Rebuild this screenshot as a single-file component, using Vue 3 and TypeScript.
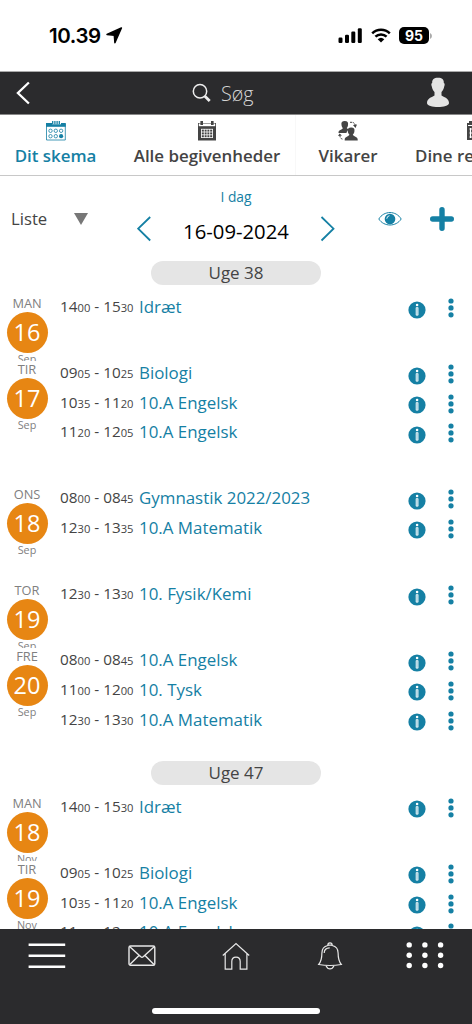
<script setup lang="ts">
interface Lesson { from: [string, string]; to: [string, string]; name: string }
interface Day { label: string; date: number; month: string; height: string; lessons: Lesson[] }
interface Week { title: string; days: Day[] }

const lesson = (a: string, b: string, name: string): Lesson => ({
  from: [a.slice(0, 2), a.slice(2)],
  to: [b.slice(0, 2), b.slice(2)],
  name,
})

const weeks: Week[] = [
  {
    title: 'Uge 38',
    days: [
      { label: 'MAN', date: 16, month: 'Sep', height: 'short', lessons: [lesson('1400', '1530', 'Idræt')] },
      {
        label: 'TIR', date: 17, month: 'Sep', height: 'tall',
        lessons: [lesson('0905', '1025', 'Biologi'), lesson('1035', '1120', '10.A Engelsk'), lesson('1120', '1205', '10.A Engelsk')],
      },
      {
        label: 'ONS', date: 18, month: 'Sep', height: 'medium',
        lessons: [lesson('0800', '0845', 'Gymnastik 2022/2023'), lesson('1230', '1335', '10.A Matematik')],
      },
      { label: 'TOR', date: 19, month: 'Sep', height: 'short', lessons: [lesson('1230', '1330', '10. Fysik/Kemi')] },
      {
        label: 'FRE', date: 20, month: 'Sep', height: 'last',
        lessons: [lesson('0800', '0845', '10.A Engelsk'), lesson('1100', '1200', '10. Tysk'), lesson('1230', '1330', '10.A Matematik')],
      },
    ],
  },
  {
    title: 'Uge 47',
    days: [
      { label: 'MAN', date: 18, month: 'Nov', height: 'short', lessons: [lesson('1400', '1530', 'Idræt')] },
      {
        label: 'TIR', date: 19, month: 'Nov', height: 'tall',
        lessons: [lesson('0905', '1025', 'Biologi'), lesson('1035', '1120', '10.A Engelsk'), lesson('1120', '1205', '10.A Engelsk')],
      },
    ],
  },
]
const dots = [0, 1, 2]
</script>

<template>
  <div class="phone">
    <div class="status">
      <span class="clock">10.39</span>
      <svg class="loc" width="17" height="17" viewBox="0 0 17 17"><path d="M15.400 1 1 7.400l7.300.8.600 7.500z" stroke="#000" stroke-width="1.500" stroke-linejoin="round" /></svg>
      <svg class="signal" width="25" height="16" viewBox="0 0 25 16">
        <rect x="0.500" y="9.500" width="4" height="5.500" rx="1.200" /><rect x="7" y="6.800" width="4" height="8.200" rx="1.200" />
        <rect x="13.300" y="3.500" width="4" height="11.500" rx="1.200" /><rect x="19.800" y="0.300" width="4" height="14.700" rx="1.200" />
      </svg>
      <svg class="wifi" width="20" height="15" viewBox="0 0 20 15">
        <path d="M1.200 5.300a12.700 12.700 0 0 1 17.600 0M4.400 8.700a8 8 0 0 1 11.200 0" fill="none" stroke="#000" stroke-width="2.500" />
        <path d="M6.700 11.200a4.900 4.900 0 0 1 6.600 0L10 14.600z" />
      </svg>
      <span class="battery">95</span>
      <svg class="cap" width="3" height="6" viewBox="0 0 3 6"><path d="M0 0q2 1 2 3t-2 3z" fill="#aaa" /></svg>
    </div>

    <header class="search">
      <svg class="back" width="15" height="24" viewBox="0 0 15 24"><path d="M12.900 1.500 1.900 12l11 10.500" fill="none" stroke="#fff" stroke-width="2.300" /></svg>
      <div class="query">
        <svg width="20" height="20" viewBox="0 0 20 20"><circle cx="8" cy="8.300" r="6.700" fill="none" stroke="#eee" stroke-width="1.500" /><path d="m12.700 13 5 5" stroke="#eee" stroke-width="2.800" /></svg>
        <span>Søg</span>
      </div>
      <svg class="person" width="24" height="31" viewBox="0 0 24 31"><path d="M12 .8c-4.400 0-6 2-5.800 5.100C5.200 6 5.100 8 5.800 9.500c.4 2.500 1.500 4.300 2.700 5.400v3.700C5.200 20.700 1 21.600 1 26c0 5.300 22 5.300 22 0 0-4.400-4.200-5.300-7.500-7.400v-3.700c1.200-1.100 2.300-2.900 2.700-5.400.7-1.500.6-3.500-.4-3.600C18 2.800 16.400.8 12 .8z" fill="#e4e4e4" /></svg>
    </header>

    <nav class="tabs">
      <div class="tab mine">
        <svg width="20" height="20" viewBox="0 0 20 20">
          <path d="M.5 3v16h18.800V3" fill="none" stroke="#1580a4" stroke-width=".8" /><path d="M0 2h19.800v3.800H0z" fill="#1580a4" />
          <path d="M6 1h9v2.300H6z" fill="#fff" /><path d="M6.700 0v3.300M8.900 0v3.300M11.100 0v3.300M13.300 0v3.300" stroke="#1580a4" stroke-width="1.300" />
          <g fill="none" stroke="#1580a4" stroke-width=".8"><circle cx="4.500" cy="9.800" r="1.700" /><circle cx="9.800" cy="9.800" r="1.700" /><circle cx="15.100" cy="9.800" r="1.700" /><circle cx="4.500" cy="15.200" r="1.700" /><circle cx="9.800" cy="15.200" r="1.700" /></g><circle cx="15.100" cy="15.200" r="2.100" fill="#1580a4" />
        </svg>
        <span>Dit skema</span>
      </div>
      <div class="tab all">
        <svg width="20" height="20" viewBox="0 0 20 20">
          <path d="M1 2h18v17.500H1z" fill="#444" /><path d="M1.800 2.500h16.400v2.700H1.800z" fill="#fff" /><path d="M4.700 0v4M15.300 0v4" stroke="#444" stroke-width="2.600" />
          <path d="M4.500 8v8.800M7.300 8v8.800M10 8v8.800M12.700 8v8.800M15.500 8v8.800M4 8.300h12M4 11h12M4 13.800h12M4 16.500h12" stroke="#fff" stroke-width=".8" />
        </svg>
        <span>Alle begivenheder</span>
      </div>
      <div class="tab subs">
        <svg width="20" height="20" viewBox="0 0 20 20" fill="#444">
          <path d="M6.800 0C4 0 3 1.500 3.500 4c.2 1.500.7 2.300 1.300 3-.5 2-4.300 1.700-4.300 4.500V12h8c0-2 1.500-2.300 2-3.600L8.700 7c.7-.7 1.200-1.500 1.300-3 .5-2.500-.500-4-3.200-4z" />
          <path d="M13.200 6.500c-2.800 0-3.900 1.600-3.400 4 .2 1.400.8 2.400 1.600 3.100-.5 2.300-4.700 2-4.700 5v.9h13v-.9c0-3-4.300-2.700-4.900-5 .9-.7 1.400-1.700 1.600-3.100.5-2.400-.4-4-3.200-4z" />
          <path d="M12 1.300c3-.3 5 .5 5.400 3.500M1.800 14c0 2.500 1 4 3.200 4.200" fill="none" stroke="#444" stroke-dasharray="2 .7" /><path d="m15 4 2.500 3L19 3.500zM0 15l1.600-2.500L4 14.500z" />
        </svg>
        <span>Vikarer</span>
      </div>
      <div class="tab rest">
        <svg width="20" height="20" viewBox="0 0 20 20"><path d="M1 2h17v17H1z" fill="#444" /><path d="M3.500 8h12M3.500 12h12M3.500 16h12M4.500 7v10M8.500 7v10" stroke="#fff" stroke-width="1.200" /><path d="M2 4.500h14" stroke="#fff" /><path d="M4.500 0v4M15 0v4" stroke="#444" stroke-width="3" /></svg>
        <span>Dine reservationer</span>
      </div>
    </nav>

    <section class="toolbar">
      <div class="view"><span>Liste</span><svg width="14" height="12" viewBox="0 0 14 12"><path d="M0 0h14L7 12z" fill="#777" /></svg></div>
      <svg class="prev" width="15" height="26" viewBox="0 0 15 26"><path d="M13.200 1 1.200 12.700l12 11.800" /></svg>
      <div class="date"><span class="today">I dag</span><span class="value">16-09-2024</span></div>
      <svg class="next" width="15" height="26" viewBox="0 0 15 26"><path d="m1.500 1 12 11.700-12 11.800" /></svg>
      <svg class="eye" width="24" height="16" viewBox="0 0 24 16"><path d="M.8 8C6-.6 18-.6 23.200 8 18 16 6 16 .8 8z" fill="none" stroke="#1580a4" stroke-width="1" /><circle cx="12" cy="8" r="5.300" fill="#1580a4" /><path d="M8.800 7.700q.2-2.600 2.700-3" stroke="#fff" fill="none" stroke-width=".9" /></svg>
      <svg class="plus" width="24" height="24" viewBox="0 0 24 24"><path d="M12 2.700v18.600M2.700 12h18.600" stroke="#1580a4" stroke-width="5.400" stroke-linecap="round" /></svg>
    </section>

    <main class="list">
      <section v-for="week in weeks" :key="week.title" class="week">
        <h2>{{ week.title }}</h2>
        <article v-for="day in week.days" :key="day.label" class="day" :class="day.height">
          <div class="stamp"><span class="name">{{ day.label }}</span><span class="disc">{{ day.date }}</span><span class="month">{{ day.month }}</span></div>
          <div class="lessons">
            <div v-for="(l, i) in day.lessons" :key="i" class="lesson">
              <span class="time">{{ l.from[0] }}<small>{{ l.from[1] }}</small> - {{ l.to[0] }}<small>{{ l.to[1] }}</small></span>
              <span class="subject">{{ l.name }}</span>
              <svg class="info" width="18" height="18" viewBox="0 0 18 18"><circle cx="9" cy="9" r="8.600" fill="#1580a4" /><circle cx="9.100" cy="4" r="1.300" fill="#fff" /><path d="M8.100 6.600h2v7.600h-2z" fill="#9acbdc" stroke="#fff" stroke-width=".7" /></svg>
              <svg class="more" width="6" height="20" viewBox="0 0 6 20" fill="#1580a4"><circle v-for="n in dots" :key="n" cx="3" :cy="3 + n * 6.9" r="2.600" /></svg>
            </div>
          </div>
        </article>
      </section>
    </main>

    <footer class="bottom">
      <div class="actions">
        <svg width="38" height="28" viewBox="0 0 38 28"><path d="M.6 2.800h36.600M.6 13.800h36.600M.6 24.700h36.600" stroke="#fff" stroke-width="2.600" /></svg>
        <svg width="28" height="28" viewBox="0 0 28 28" fill="none" stroke="#e8e8e8" stroke-width="1.400"><rect x="1" y="4" width="25.800" height="19.300" rx="1.500" /><path d="m1.800 4.800 11 10q1.200 1 2.400 0l11-10M1.800 22.500 11 13.400M26 22.500l-9-9.100" /></svg>
        <svg width="28" height="28" viewBox="0 0 28 28" fill="none" stroke="#e8e8e8" stroke-width="1.200"><path d="m.8 13.500 13.200-12 13.200 12M3.200 11.700v15.400h6.600v-7.500q0-4.500 4.200-4.500t4.200 4.500v7.500h6.700V11.700" /></svg>
        <svg width="28" height="28" viewBox="0 0 28 28" fill="none" stroke="#e8e8e8" stroke-width="1.200"><path d="M11.800 3.500Q11.800.8 14 .8t2.200 2.700c4.300 1 5.900 4 5.900 7.500 0 5 .3 8 3.200 11.500q-11.300 2-22.600 0C5.600 19 5.900 16 5.900 11c0-3.500 1.600-6.500 5.900-7.500z" /><path d="M12 3.200h4M8.200 11q0-5 5.500-5.200M10 23.700q1.500 3.200 4 3.200t4-3.200" /></svg>
        <svg width="38" height="28" viewBox="0 0 38 28" fill="#fff"><template v-for="r in dots" :key="r"><circle v-for="c in dots" :key="c" :cx="3.2 + c * 15.7" :cy="2.900 + r * 10.3" r="2.700" /></template></svg>
      </div>
      <div class="home-bar"></div>
    </footer>
  </div>
</template>

<style>
body { margin: 0; background: #fff; }
</style>

<style scoped>
* { box-sizing: border-box; }
svg { display: block; flex: none; }
.phone { width: 472px; height: 1024px; overflow: hidden; display: flex; flex-direction: column; background: #fff; color: #444; font-family: "Open Sans", sans-serif; }
.status { height: 71px; flex: none; display: flex; align-items: center; padding-left: 49px; font-family: Inter, sans-serif; color: #000; }
.clock { font-size: 20.500px; font-weight: 600; width: 53px; letter-spacing: -.4px; white-space: nowrap; }
.loc { margin-left: 4px; }
.signal { margin-left: 215px; }
.wifi { margin-left: 8px; }
.battery { margin-left: 8px; width: 30px; height: 17px; border-radius: 5px; background: #000; color: #fff; font-size: 14px; font-weight: 700; line-height: 17px; text-align: center; }
.cap { margin-left: 1px; }
.search { height: 44px; flex: none; background: #2b2b2d; border-top: 1px solid #aaa; border-bottom: 1px solid #888; display: flex; align-items: center; padding: 0 22px 0 16px; }
.back { margin-top: -1px; }
.query { display: flex; align-items: center; gap: 9px; margin-left: 161px; width: 100px; color: #d5d5d5; font-size: 19.700px; font-weight: 300; }
.person { margin-left: auto; margin-top: -2px; }
.tabs { height: 61px; flex: none; display: flex; border-bottom: 1px solid #c8c8c8; overflow: hidden; }
.tab { flex: none; display: flex; flex-direction: column; align-items: center; padding-top: 6px; font-size: 16.900px; font-weight: 600; line-height: 24px; white-space: nowrap; color: #444; }
.tab span { margin-top: 3px; }
.mine { width: 111px; color: #1580a4; }
.all { width: 177px; margin-left: 8px; border-right: 1px solid #f8f8f8; }
.subs { width: 104px; }
.rest { width: 152px; margin-left: 15px; align-items: flex-start; }
.rest svg { margin-left: 51px; }
.toolbar { height: 85px; flex: none; display: flex; align-items: flex-start; }
.view { width: 137px; padding: 31px 0 0 11px; display: flex; align-items: center; font-size: 16.700px; line-height: 24px; }
.view span { width: 63px; }
.prev, .next { margin-top: 40px; fill: none; stroke: #1580a4; stroke-width: 1.800; }
.date { width: 168px; display: flex; flex-direction: column; align-items: center; }
.today { margin-top: 11px; font-size: 13.800px; line-height: 20px; color: #1580a4; }
.value { margin-top: 11px; font-size: 20.300px; line-height: 27px; color: #000; }
.eye { margin: 35px 0 0 43px; }
.plus { margin: 31px 0 0 28px; }
.list { flex: 1; min-height: 0; overflow: hidden; }
h2 { width: 170px; height: 24px; margin: 0 auto 10px 151px; border-radius: 12px; background: #e5e5e5; text-align: center; font-size: 17px; font-weight: 400; line-height: 24px; }
.day { display: flex; overflow: hidden; }
.short { height: 66px; }
.medium { height: 96px; }
.tall { height: 125.400px; }
.last { height: 112.600px; }
.stamp { width: 54px; display: flex; flex-direction: column; align-items: center; color: #808080; }
.name { font-size: 12.800px; line-height: 17px; }
.disc { width: 41px; height: 41px; flex: none; border-radius: 50%; background: #e78613; color: #fff; font-size: 23.500px; line-height: 41px; text-align: center; }
.month { font-size: 10.800px; line-height: 12px; }
.lessons { width: 418px; padding-left: 6px; }
.lesson { height: 29.600px; display: flex; align-items: flex-start; }
.time { width: 79px; white-space: nowrap; font-size: 15.300px; line-height: 22px; }
small { font-size: 11.200px; }
.subject { width: 269px; font-size: 16.900px; line-height: 23px; color: #1580a4; white-space: nowrap; }
.info { margin-top: 5.500px; }
.more { margin: 3px 0 0 22px; }
.bottom { height: 95px; flex: none; background: #2b2b2d; display: flex; flex-direction: column; align-items: center; }
.actions { width: 472px; display: grid; grid-template-columns: repeat(5, 1fr); justify-items: center; padding-top: 13px; }
.home-bar { width: 168px; height: 6px; margin-top: 38px; border-radius: 3px; background: #fff; }
</style>
